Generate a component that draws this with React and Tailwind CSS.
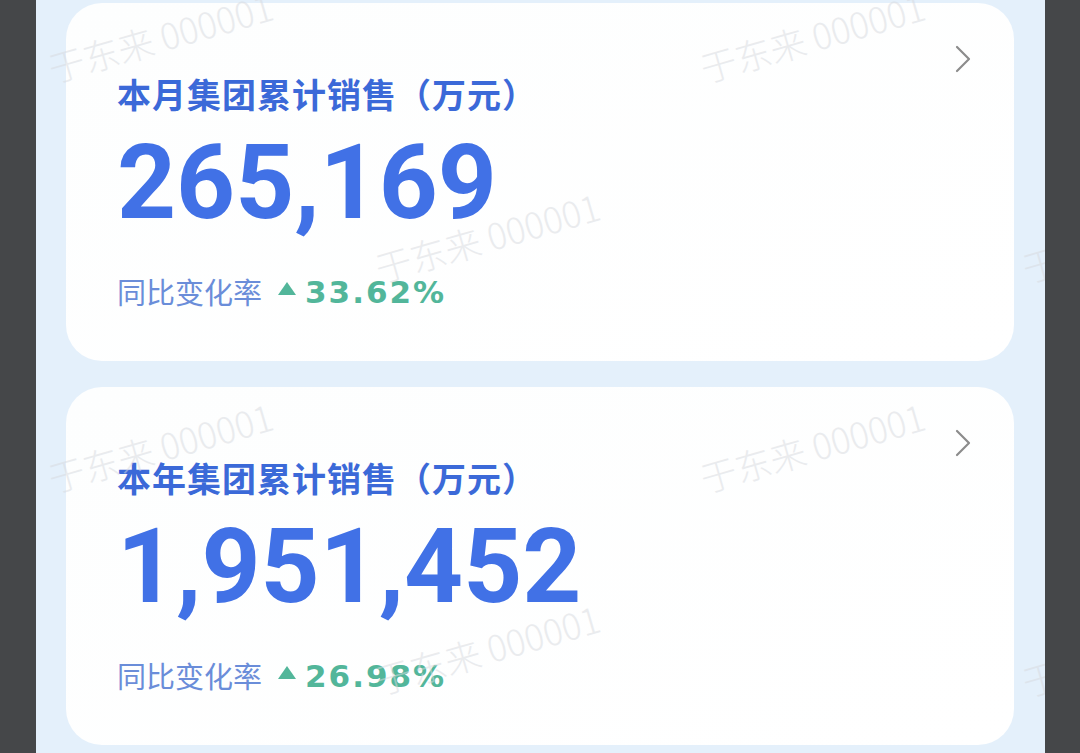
import React from 'react';

const cards = [
  { title: '本月集团累计销售（万元）', value: '265,169', rate: '33.62%' },
  { title: '本年集团累计销售（万元）', value: '1,951,452', rate: '26.98%' },
];

// watermark tiles: centre points inside the panel
const marks = [
  [124, 36], [776, 36], [451, 236], [1098, 236],
  [124, 446], [776, 446], [451, 648], [1098, 650],
];

const Chevron = () => (
  <svg width="16" height="28" viewBox="0 0 16 28" fill="none">
    <path d="M2 2 L14 14 L2 26" stroke="#8c8c8c" strokeWidth="2.2" strokeLinecap="round" strokeLinejoin="round" />
  </svg>
);

const SalesCard = ({ title, value, rate }) => (
  <div className="relative h-[358px] shrink-0 rounded-[36px] bg-gradient-to-br from-[#fdfefe] to-white pl-[51px] pt-[71px]">
    <div className="absolute right-[43px] top-[42px]">
      <Chevron />
    </div>
    <div className="text-[34px] leading-[40px] font-semibold text-[#3b69d8] tracking-[1px] font-['Noto_Sans_CJK_SC',sans-serif]">
      {title}
    </div>
    <div className="mt-[16px] text-[103px] leading-[105px] font-bold text-[#4171e6] font-['Roboto',sans-serif]">
      {value}
    </div>
    <div className="mt-[36px] flex items-center h-[40px]">
      <span className="text-[29px] leading-[40px] text-[#6a8dd9] font-['Noto_Sans_CJK_SC',sans-serif]">
        同比变化率
      </span>
      <svg className="ml-[16px] mt-[-6px]" width="18" height="13" viewBox="0 0 18 13">
        <path d="M9 0 L18 13 L0 13 Z" fill="#52b69a" />
      </svg>
      <span className="ml-[9px] mt-[2px] text-[31px] leading-[40px] font-bold tracking-[2px] text-[#52b69a] font-['DejaVu_Sans',sans-serif]">
        {rate}
      </span>
    </div>
  </div>
);

export default function App() {
  return (
    <div className="flex h-[753px] w-[1080px] overflow-hidden bg-[#454749]">
      <div className="w-[36px] shrink-0" />
      <div className="relative flex w-[1009px] shrink-0 flex-col gap-[26px] overflow-hidden bg-[#e4f0fb] pl-[30px] pr-[31px] pt-[3px]">
        {cards.map((c) => (
          <SalesCard key={c.title} {...c} />
        ))}
        <div className="pointer-events-none absolute inset-0">
          {marks.map(([x, y], i) => (
            <div
              key={i}
              className="absolute -translate-x-1/2 -translate-y-1/2 -rotate-[16deg] whitespace-nowrap text-[36px] font-light leading-none text-[#d7dadf] opacity-50 font-['Noto_Sans_CJK_SC',sans-serif]"
              style={{ left: x, top: y }}
            >
              于东来 000001
            </div>
          ))}
        </div>
      </div>
    </div>
  );
}
